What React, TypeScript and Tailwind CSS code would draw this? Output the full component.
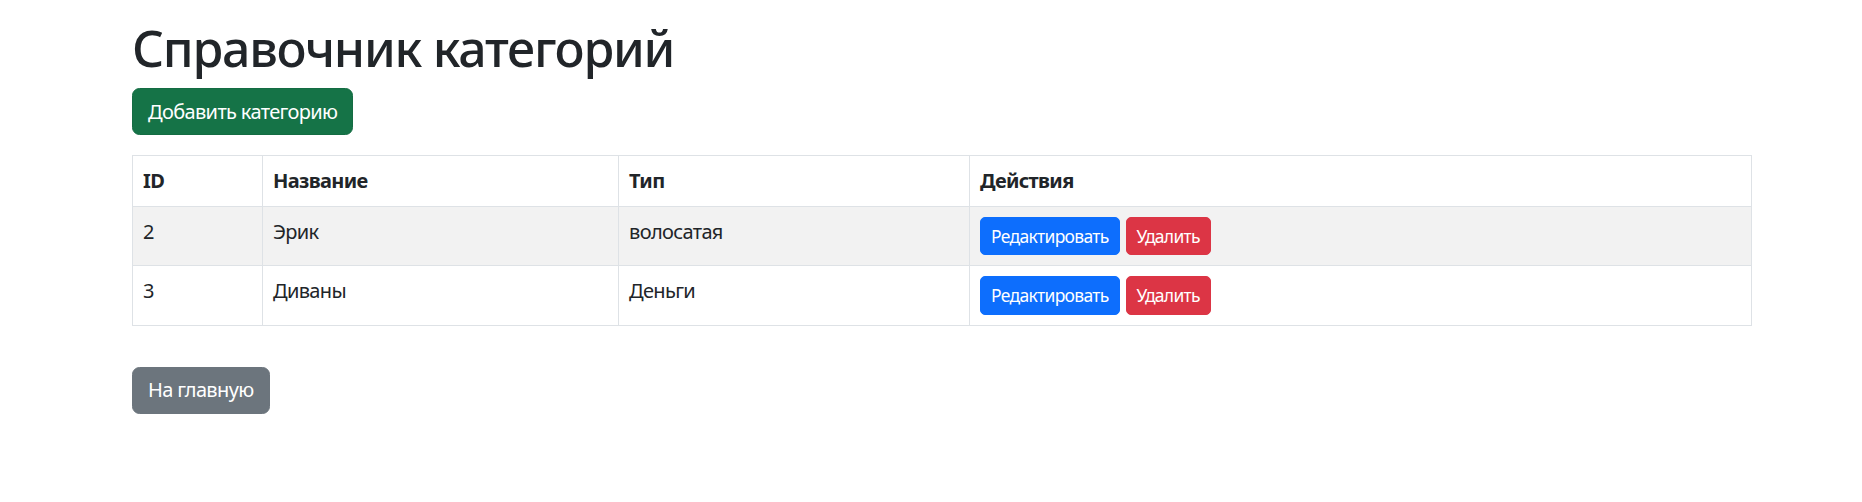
import React from 'react'

const categories = [
  { id: 2, name: 'Эрик', type: 'волосатая' },
  { id: 3, name: 'Диваны', type: 'Деньги' },
]

export default function App() {
  return (
    <div className="min-h-screen bg-white text-[#212529] font-['Noto_Sans',sans-serif] text-[20px] leading-[30px] tracking-[-0.032em]">
      <div className="pl-[132px] pt-[18px]">
        <h1 className="text-[50px] leading-[60px] font-medium tracking-[-0.025em] mb-[10px]">Справочник категорий</h1>
        <button className="bg-[#157347] border border-[#146c43] text-white rounded-[7.5px] px-[15px] py-[7.5px] leading-[30px]">
          Добавить категорию
        </button>

        <table className="mt-[20px] w-[1620px] border-collapse border border-[#dee2e6] align-top">
          <thead>
            <tr className="text-left">
              <th className="w-[130px] border border-[#dee2e6] p-[10px] font-bold">ID</th>
              <th className="w-[356px] border border-[#dee2e6] p-[10px] font-bold">Название</th>
              <th className="w-[351px] border border-[#dee2e6] p-[10px] font-bold">Тип</th>
              <th className="border border-[#dee2e6] p-[10px] font-bold">Действия</th>
            </tr>
          </thead>
          <tbody>
            {categories.map((c, i) => (
              <tr key={c.id} className={i % 2 === 0 ? 'bg-[#f2f2f2]' : 'bg-white'}>
                <td className="border border-[#dee2e6] p-[10px] align-top">{c.id}</td>
                <td className="border border-[#dee2e6] p-[10px] align-top">{c.name}</td>
                <td className="border border-[#dee2e6] p-[10px] align-top">{c.type}</td>
                <td className="border border-[#dee2e6] p-[10px] align-top">
                  <div className="flex gap-[6px]">
                    <button className="bg-[#0d6efd] border border-[#0d6efd] text-white text-[17.5px] leading-[26.25px] tracking-[-0.04em] px-[10px] py-[5px] rounded-[5px]">
                      Редактировать
                    </button>
                    <button className="bg-[#dc3545] border border-[#dc3545] text-white text-[17.5px] leading-[26.25px] tracking-[-0.04em] px-[10px] py-[5px] rounded-[5px]">
                      Удалить
                    </button>
                  </div>
                </td>
              </tr>
            ))}
          </tbody>
        </table>

        <button className="mt-[41px] bg-[#6c757d] border border-[#6c757d] text-white rounded-[7.5px] px-[15px] py-[7.5px] leading-[30px]">
          На главную
        </button>
      </div>
    </div>
  )
}
